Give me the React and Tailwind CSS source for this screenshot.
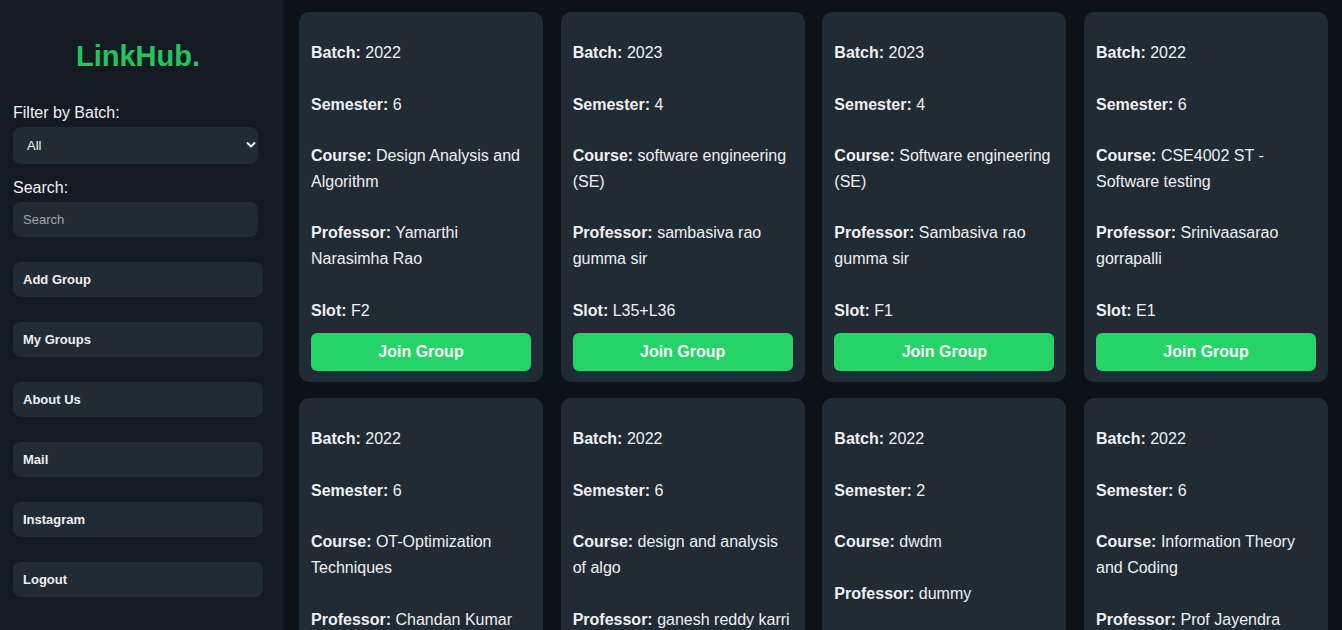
import React from "react";

const cards = [
  { batch: "2022", sem: "6", course: "Design Analysis and Algorithm", prof: "Yamarthi Narasimha Rao", slot: "F2" },
  { batch: "2023", sem: "4", course: "software engineering (SE)", prof: "sambasiva rao gumma sir", slot: "L35+L36" },
  { batch: "2023", sem: "4", course: "Software engineering (SE)", prof: "Sambasiva rao gumma sir", slot: "F1" },
  { batch: "2022", sem: "6", course: "CSE4002 ST - Software testing", prof: "Srinivaasarao gorrapalli", slot: "E1" },
  { batch: "2022", sem: "6", course: "OT-Optimization Techniques", prof: "Chandan Kumar Behera", slot: "C1" },
  { batch: "2022", sem: "6", course: "design and analysis of algo", prof: "ganesh reddy karri", slot: "A1" },
  { batch: "2022", sem: "2", course: "dwdm", prof: "dummy", slot: "B1" },
  { batch: "2022", sem: "6", course: "Information Theory and Coding", prof: "Prof Jayendra Kumar", slot: "D1" },
];

function Field({ label, value }) {
  return (
    <p className="leading-[25.6px] text-[16px] text-[#eef0f2]">
      <span className="font-bold">{label}:</span> {value}
    </p>
  );
}

function Card({ c }) {
  return (
    <div className="flex flex-col rounded-[10px] bg-[#212b33] px-3 pt-[28px] pb-[11px]">
      <div className="flex flex-col gap-[26px]">
        <Field label="Batch" value={c.batch} />
        <Field label="Semester" value={c.sem} />
        <Field label="Course" value={c.course} />
        <Field label="Professor" value={c.prof} />
        <Field label="Slot" value={c.slot} />
      </div>
      <button className="mt-[10px] h-[38px] w-full rounded-[6px] bg-[#25d366] text-[16px] font-bold text-white">
        Join Group
      </button>
    </div>
  );
}

const navs = ["Add Group", "My Groups", "About Us", "Mail", "Instagram", "Logout"];

export default function App() {
  return (
    <div
      className="flex h-screen w-full overflow-hidden bg-[#0d1216] text-white"
      style={{ fontFamily: '"Liberation Sans", Arial, sans-serif' }}
    >
      <aside className="flex w-[283px] shrink-0 flex-col bg-[#141a21] pl-[13px] pr-[20px] pt-[39px]">
        <div className="h-[34px] text-center text-[29px] font-bold leading-[34px] text-[#22c55e]">LinkHub.</div>
        <label className="mt-[31px] block h-[18px] text-[16px] leading-[18px] text-[#eef0f2]">Filter by Batch:</label>
        <div className="relative mt-[5px] h-[37px] w-[245px] rounded-[8px] bg-[#212b33]">
          <span className="absolute left-[14px] top-0 text-[13px] leading-[37px] text-[#eef0f2]">All</span>
          <svg className="absolute right-[2px] top-[14px]" width="10" height="8" viewBox="0 0 10 8" fill="none">
            <path d="M1.5 2L5 5.5L8.5 2" stroke="#e5e7eb" strokeWidth="2" strokeLinecap="round" strokeLinejoin="round" />
          </svg>
        </div>
        <label className="mt-[15px] block h-[18px] text-[16px] leading-[18px] text-[#eef0f2]">Search:</label>
        <div className="mt-[5px] flex h-[35px] w-[245px] items-center rounded-[8px] bg-[#212b33] px-[10px]">
          <span className="text-[13px] text-[#a3a8ad]">Search</span>
        </div>
        <div className="mt-[25px] flex flex-col gap-[25px]">
          {navs.map((n) => (
            <div key={n} className="flex h-[35px] w-[250px] items-center rounded-[8px] bg-[#212b33] px-[10px] text-[13px] font-semibold text-[#eef0f2]">
              {n}
            </div>
          ))}
        </div>
      </aside>
      <main className="min-w-0 flex-1 pl-4 pr-[14px] pt-3">
        <div className="grid grid-cols-4 gap-x-[17.67px] gap-y-4">
          {cards.map((c, i) => (
            <Card key={i} c={c} />
          ))}
        </div>
      </main>
    </div>
  );
}
